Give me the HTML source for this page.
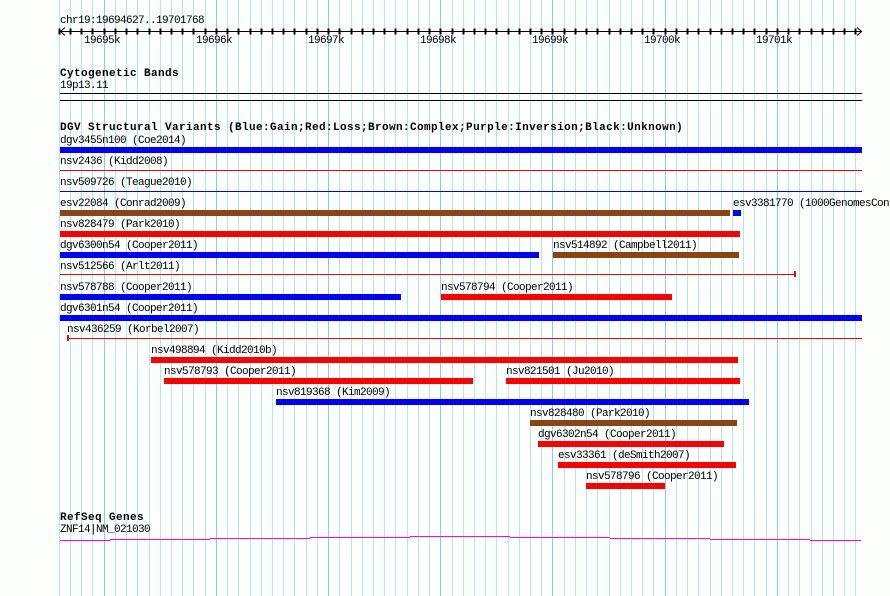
<!DOCTYPE html>
<html><head><meta charset="utf-8"><style>
html,body{margin:0;padding:0;}
body{width:890px;height:596px;background:#fbfefb;position:relative;overflow:hidden;font-family:"Liberation Mono","DejaVu Sans Mono",monospace;font-size:11px;letter-spacing:-0.6px;color:#000;}
.t{position:absolute;white-space:pre;line-height:11px;}
.b{font-weight:bold;letter-spacing:0.4px;}
svg{position:absolute;left:0;top:0;}
</style></head><body>
<svg width="890" height="596" xmlns="http://www.w3.org/2000/svg" shape-rendering="crispEdges">
<g id="grid"></g>
<g stroke="#000" stroke-width="1">
<line x1="60" y1="31.5" x2="862" y2="31.5"/>
<polyline points="65,27.5 60.5,31.5 65,35.5" fill="none" shape-rendering="auto"/>
<polyline points="857,27.5 861.5,31.5 857,35.5" fill="none" shape-rendering="auto"/>
</g>
<g id="ticks" stroke="#000"></g>
<rect x="60" y="93" width="802" height="1" fill="#000"/>
<rect x="60" y="100" width="802" height="1" fill="#000"/>
<rect x="60" y="147" width="802" height="6" fill="#0000ff"/>
<rect x="60" y="170" width="802" height="1" fill="#ff0000"/>
<rect x="60" y="191" width="802" height="1" fill="#0000ff"/>
<rect x="60" y="210" width="670" height="6" fill="#8b4513"/>
<rect x="733" y="210" width="8" height="6" fill="#0000ff"/>
<rect x="60" y="231" width="680" height="6" fill="#ff0000"/>
<rect x="60" y="252" width="479" height="6" fill="#0000ff"/>
<rect x="553" y="252" width="186" height="6" fill="#8b4513"/>
<rect x="60" y="274" width="735" height="1" fill="#ff0000"/>
<rect x="794" y="271" width="2" height="6" fill="#ff0000"/>
<rect x="60" y="294" width="341" height="6" fill="#0000ff"/>
<rect x="441" y="294" width="231" height="6" fill="#ff0000"/>
<rect x="60" y="315" width="802" height="6" fill="#0000ff"/>
<rect x="67" y="338" width="795" height="1" fill="#ff0000"/>
<rect x="67" y="335" width="2" height="6" fill="#ff0000"/>
<rect x="151" y="357" width="587" height="6" fill="#ff0000"/>
<rect x="164" y="378" width="309" height="6" fill="#ff0000"/>
<rect x="506" y="378" width="234" height="6" fill="#ff0000"/>
<rect x="276" y="399" width="473" height="6" fill="#0000ff"/>
<rect x="530" y="420" width="207" height="6" fill="#8b4513"/>
<rect x="538" y="441" width="186" height="6" fill="#ff0000"/>
<rect x="558" y="462" width="178" height="6" fill="#ff0000"/>
<rect x="586" y="483" width="79" height="6" fill="#ff0000"/>
<g fill="#ff00ff">
<rect x="60" y="540" width="50" height="1"/>
<rect x="110" y="539" width="100" height="1"/>
<rect x="210" y="538" width="100" height="1"/>
<rect x="310" y="537" width="100" height="1"/>
<rect x="410" y="536" width="100" height="1"/>
<rect x="510" y="537" width="100" height="1"/>
<rect x="610" y="538" width="100" height="1"/>
<rect x="710" y="539" width="100" height="1"/>
<rect x="810" y="540" width="51" height="1"/>
</g>
</svg>
<script>
(function(){
var g=document.getElementById('grid'),t=document.getElementById('ticks'),ns='http://www.w3.org/2000/svg';
for(var i=0;i<72;i++){var x=Math.round(58.8+i*11.22);if(x>856)break;
var major=((i-4)%10===0);
var r=document.createElementNS(ns,'rect');r.setAttribute('x',x);r.setAttribute('y',0);r.setAttribute('width',1);r.setAttribute('height',596);
r.setAttribute('fill',major?'#86ccee':'#aee9ee');g.appendChild(r);
var l=document.createElementNS(ns,'rect');l.setAttribute('x',x);l.setAttribute('y',29);l.setAttribute('width',1);l.setAttribute('height',5);l.setAttribute('fill','#000');t.appendChild(l);}
})();
</script>
<div class="t" style="left:60px;top:16px">chr19:19694627..19701768</div>
<div class="t" style="left:84px;top:36px">19695k</div>
<div class="t" style="left:196px;top:36px">19696k</div>
<div class="t" style="left:308px;top:36px">19697k</div>
<div class="t" style="left:420px;top:36px">19698k</div>
<div class="t" style="left:532px;top:36px">19699k</div>
<div class="t" style="left:644px;top:36px">19700k</div>
<div class="t" style="left:756px;top:36px">19701k</div>
<div class="t b" style="left:60px;top:69px">Cytogenetic Bands</div>
<div class="t" style="left:60px;top:81px">19p13.11</div>
<div class="t b" style="left:60px;top:123px">DGV Structural Variants (Blue:Gain;Red:Loss;Brown:Complex;Purple:Inversion;Black:Unknown)</div>
<div class="t" style="left:60px;top:136px">dgv3455n100 (Coe2014)</div>
<div class="t" style="left:60px;top:157px">nsv2436 (Kidd2008)</div>
<div class="t" style="left:60px;top:178px">nsv509726 (Teague2010)</div>
<div class="t" style="left:60px;top:199px">esv22084 (Conrad2009)</div>
<div class="t" style="left:733px;top:199px">esv3381770 (1000GenomesCon</div>
<div class="t" style="left:60px;top:220px">nsv828479 (Park2010)</div>
<div class="t" style="left:60px;top:241px">dgv6300n54 (Cooper2011)</div>
<div class="t" style="left:553px;top:241px">nsv514892 (Campbell2011)</div>
<div class="t" style="left:60px;top:262px">nsv512566 (Arlt2011)</div>
<div class="t" style="left:60px;top:283px">nsv578788 (Cooper2011)</div>
<div class="t" style="left:441px;top:283px">nsv578794 (Cooper2011)</div>
<div class="t" style="left:60px;top:304px">dgv6301n54 (Cooper2011)</div>
<div class="t" style="left:67px;top:325px">nsv436259 (Korbel2007)</div>
<div class="t" style="left:151px;top:346px">nsv498894 (Kidd2010b)</div>
<div class="t" style="left:164px;top:367px">nsv578793 (Cooper2011)</div>
<div class="t" style="left:506px;top:367px">nsv821501 (Ju2010)</div>
<div class="t" style="left:276px;top:388px">nsv819368 (Kim2009)</div>
<div class="t" style="left:530px;top:409px">nsv828480 (Park2010)</div>
<div class="t" style="left:538px;top:430px">dgv6302n54 (Cooper2011)</div>
<div class="t" style="left:558px;top:451px">esv33361 (deSmith2007)</div>
<div class="t" style="left:586px;top:472px">nsv578796 (Cooper2011)</div>
<div class="t b" style="left:60px;top:513px">RefSeq Genes</div>
<div class="t" style="left:60px;top:525px">ZNF14|NM_021030</div>
</body></html>
